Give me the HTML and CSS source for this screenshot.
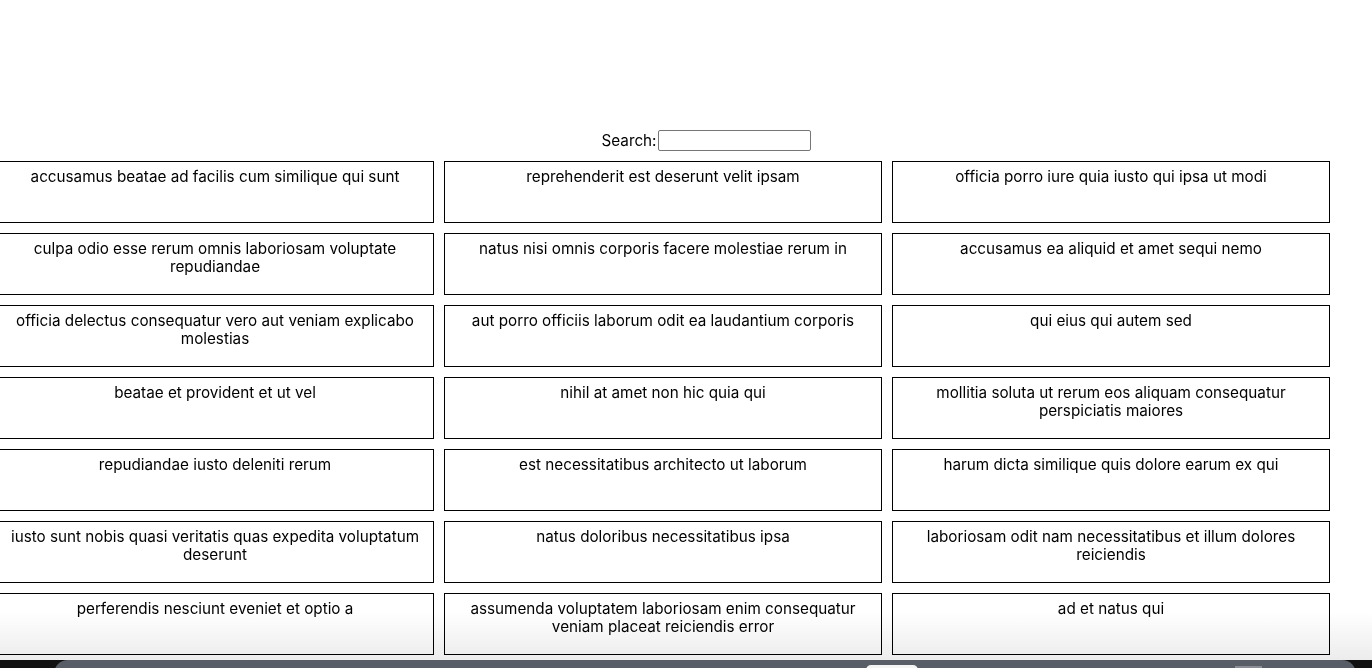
FILE: index.html
```html
<!DOCTYPE html>
<html>
<head>
<meta charset="utf-8">
<link rel="stylesheet" href="styles.css">
</head>
<body>
<div class="page">
  <div class="search-row">
    <label class="search-label" for="q">Search:</label><input id="q" class="search-input" type="text">
  </div>
  <div class="grid">
    <div class="card">accusamus beatae ad facilis cum similique qui sunt</div>
    <div class="card">reprehenderit est deserunt velit ipsam</div>
    <div class="card">officia porro iure quia iusto qui ipsa ut modi</div>
    <div class="card">culpa odio esse rerum omnis laboriosam voluptate repudiandae</div>
    <div class="card">natus nisi omnis corporis facere molestiae rerum in</div>
    <div class="card">accusamus ea aliquid et amet sequi nemo</div>
    <div class="card">officia delectus consequatur vero aut veniam explicabo molestias</div>
    <div class="card">aut porro officiis laborum odit ea laudantium corporis</div>
    <div class="card">qui eius qui autem sed</div>
    <div class="card">beatae et provident et ut vel</div>
    <div class="card">nihil at amet non hic quia qui</div>
    <div class="card">mollitia soluta ut rerum eos aliquam consequatur perspiciatis maiores</div>
    <div class="card">repudiandae iusto deleniti rerum</div>
    <div class="card">est necessitatibus architecto ut laborum</div>
    <div class="card">harum dicta similique quis dolore earum ex qui</div>
    <div class="card">iusto sunt nobis quasi veritatis quas expedita voluptatum deserunt</div>
    <div class="card">natus doloribus necessitatibus ipsa</div>
    <div class="card">laboriosam odit nam necessitatibus et illum dolores reiciendis</div>
    <div class="card">perferendis nesciunt eveniet et optio a</div>
    <div class="card">assumenda voluptatem laboriosam enim consequatur veniam placeat reiciendis error</div>
    <div class="card">ad et natus qui</div>
  </div>
</div>
<div class="fade"></div>
<div class="dock-corner"></div>
<div class="dock">
  <span class="dock-pill"></span>
  <span class="dock-chip"></span>
</div>
</body>
</html>
```
FILE: styles.css
```css
html, body {
  margin: 0;
  padding: 0;
  background: #fff;
  overflow: hidden;
}
body {
  font-family: Inter, "Noto Sans", sans-serif;
  font-size: 15.25px;
  color: #000;
  width: 1372px;
  height: 668px;
}
.page {
  padding-top: 130px;
}
.search-row {
  display: flex;
  justify-content: center;
  align-items: center;
  padding-left: 40px;
  height: 21px;
}
.search-label {
  font-size: 15.25px;
  line-height: 19px;
}
.search-input {
  box-sizing: border-box;
  width: 153px;
  height: 21px;
  margin: 0 0 0 1px;
  border: 1px solid #767676;
  border-radius: 2px;
  padding: 1px 2px;
  background: #fff;
}
.grid {
  display: grid;
  grid-template-columns: repeat(3, 438px);
  grid-auto-rows: 62px;
  gap: 10px;
  margin: 10px 0 0 -4px;
}
.card {
  box-sizing: border-box;
  border: 1px solid #000;
  text-align: center;
  padding: 6px 8px 0;
  line-height: 18px;
  font-size: 15.25px;
}
.fade {
  position: absolute;
  left: 0;
  right: 0;
  top: 612px;
  height: 48px;
  background: linear-gradient(to bottom, rgba(236,236,236,0), rgba(236,236,236,1));
  mix-blend-mode: multiply;
  pointer-events: none;
}
.dock-corner {
  position: absolute;
  left: 0;
  right: 0;
  top: 660px;
  height: 8px;
  background: #111;
}
.dock {
  position: absolute;
  left: 54px;
  right: 16px;
  top: 660px;
  height: 24px;
  background: #595e66;
  border-radius: 14px 14px 0 0;
}
.dock-pill {
  position: absolute;
  left: 812px;
  top: 5px;
  width: 52px;
  height: 10px;
  border-radius: 6px;
  background: #f4f4f4;
}
.dock-chip {
  position: absolute;
  left: 1181px;
  top: 6px;
  width: 27px;
  height: 6px;
  background: #8a8e94;
}
```
